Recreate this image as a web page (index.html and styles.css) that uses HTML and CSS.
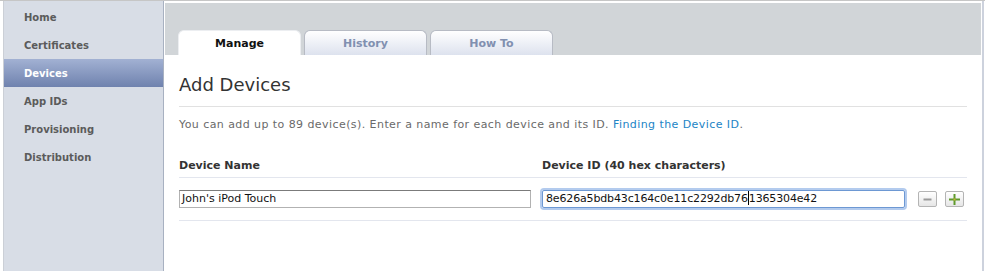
FILE: index.html
```html
<!DOCTYPE html>
<html>
<head>
<meta charset="utf-8">
<link rel="stylesheet" href="styles.css">
</head>
<body>
<div class="page">
  <nav class="sidebar">
    <div class="nav-item">Home</div>
    <div class="nav-item">Certificates</div>
    <div class="nav-item active">Devices</div>
    <div class="nav-item">App IDs</div>
    <div class="nav-item">Provisioning</div>
    <div class="nav-item">Distribution</div>
  </nav>
  <main class="main">
    <div class="tabbar">
      <div class="tab active">Manage</div>
      <div class="tab">History</div>
      <div class="tab">How To</div>
    </div>
    <section class="content">
      <h1 class="title">Add Devices</h1>
      <p class="desc">You can add up to 89 device(s). Enter a name for each device and its ID. <a class="link" href="#">Finding the Device ID</a>.</p>
      <div class="grid head">
        <div class="col-head">Device Name</div>
        <div class="col-head">Device ID (40 hex characters)</div>
        <div></div>
      </div>
      <div class="grid row">
        <div class="field">John's iPod Touch</div>
        <div class="field focus">8e626a5bdb43c164c0e11c2292db76<span class="caret"></span>1365304e42</div>
        <div class="buttons">
          <button class="btn" type="button"><svg width="9" height="9" viewBox="0 0 9 9"><rect x="0.5" y="3.5" width="8" height="2" fill="#9a9a9a"/></svg></button>
          <button class="btn" type="button"><svg width="11" height="11" viewBox="0 0 11 11"><rect x="0" y="4.5" width="11" height="2" fill="#5f9a2c"/><rect x="4.5" y="0" width="2" height="11" fill="#5f9a2c"/><rect x="4.5" y="4.5" width="2" height="2" fill="#c9b43a"/></svg></button>
        </div>
      </div>
    </section>
  </main>
</div>
</body>
</html>
```
FILE: styles.css
```css
* { box-sizing: border-box; }
html, body { margin: 0; padding: 0; background: #fff; }
body { font-family: "DejaVu Sans", "Liberation Sans", sans-serif; }

.page {
  display: flex;
  height: 271px;
  border-top: 1px solid #c6c6c6;
  padding-left: 3px;
  padding-right: 1px;
}

.sidebar {
  width: 161px;
  flex: none;
  background: #d8dde6;
  border-left: 1px solid #cbcfd6;
  border-right: 1px solid #a8b1c1;
  padding-top: 2px;
}
.nav-item {
  height: 28px;
  padding-top: 2px;
  line-height: 26px;
  padding-left: 20px;
  font-size: 10px;
  font-weight: bold;
  color: #5b5b5b;
}
.nav-item.active {
  color: #fff;
  background: linear-gradient(#a2b1d3, #6f82ae);
}

.main {
  width: 820px;
  flex: none;
  padding: 2px 1px 0 1px;
  border-right: 2px solid #cdd2dd;
}

.tabbar {
  height: 52px;
  background: #d1d5d8;
  display: flex;
  align-items: flex-end;
  gap: 3px;
  padding-left: 13px;
}
.tab {
  width: 123px;
  height: 25px;
  line-height: 26px;
  text-align: center;
  font-size: 11px;
  font-weight: bold;
  color: #8190b0;
  background: linear-gradient(#ffffff, #dde2ee);
  border: 1px solid #b7bbc4;
  border-bottom: none;
  border-radius: 6px 6px 0 0;
}
.tab.active {
  color: #111;
  background: #fff;
  border-color: #eceef1;
}

.content {
  padding: 0 14px;
}
.title {
  margin: 18px 0 0;
  font-size: 18px;
  line-height: 24px;
  font-weight: normal;
  color: #333;
  padding-bottom: 9px;
  border-bottom: 1px solid #e1e1e1;
}
.desc {
  margin: 9px 0 0;
  font-size: 11px;
  letter-spacing: 0.43px;
  line-height: 17px;
  color: #6a6a6a;
}
.link { color: #2184c6; text-decoration: none; }

.grid {
  display: grid;
  grid-template-columns: 352px 363px 1fr;
  column-gap: 11px;
  align-items: center;
}
.head {
  margin-top: 25px;
  padding-bottom: 3px;
  border-bottom: 1px solid #e3e6ee;
}
.col-head {
  font-size: 11px;
  line-height: 16px;
  font-weight: bold;
  color: #333;
}
.row {
  padding: 12px 0 12px;
  border-bottom: 1px solid #e3e6ee;
}
.field {
  height: 18px;
  line-height: 16px;
  font-size: 11px;
  color: #111;
  padding-left: 2px;
  border: 1px solid #b2b2b2;
  border-top-color: #7b7b7b;
  white-space: nowrap;
  overflow: hidden;
}
.field.focus {
  border: 1px solid #6d98d3;
  border-radius: 2px;
  box-shadow: 0 0 0 2px #b3cbee;
  padding-left: 3px;
  letter-spacing: -0.15px;
}
.caret {
  display: inline-block;
  width: 1px;
  height: 14px;
  background: #000;
  vertical-align: -3px;
}
.buttons {
  display: flex;
  gap: 8px;
  padding-left: 2px;
}
.btn {
  width: 19px;
  height: 16px;
  padding: 0;
  margin: 0;
  border: 1px solid #b4b4b4;
  border-radius: 2px;
  background: linear-gradient(#ffffff, #e6e6e6);
  display: flex;
  align-items: center;
  justify-content: center;
}
.btn svg { display: block; }
```
